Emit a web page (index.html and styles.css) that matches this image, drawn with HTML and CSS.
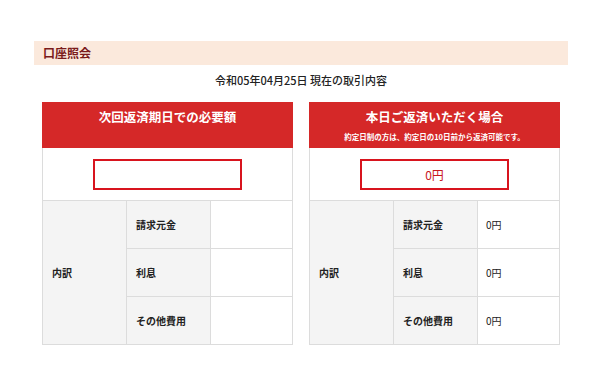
FILE: index.html
```html
<!DOCTYPE html>
<html lang="ja">
<head>
<meta charset="utf-8">
<link rel="stylesheet" href="styles.css">
</head>
<body>
<div class="page">
  <h1 class="page-title">口座照会</h1>
  <p class="date">令和05年04月25日 現在の取引内容</p>
  <div class="panels">
    <section class="panel">
      <div class="panel-head">
        <div class="panel-title">次回返済期日での必要額</div>
      </div>
      <div class="panel-body">
        <div class="amount-row"><div class="amount-box"></div></div>
        <div class="breakdown">
          <div class="cell label-main">内訳</div>
          <div class="cell label">請求元金</div>
          <div class="cell value"></div>
          <div class="cell label">利息</div>
          <div class="cell value"></div>
          <div class="cell label">その他費用</div>
          <div class="cell value"></div>
        </div>
      </div>
    </section>
    <section class="panel">
      <div class="panel-head">
        <div class="panel-title">本日ご返済いただく場合</div>
        <div class="panel-sub">約定日制の方は、約定日の10日前から返済可能です。</div>
      </div>
      <div class="panel-body">
        <div class="amount-row"><div class="amount-box">0円</div></div>
        <div class="breakdown">
          <div class="cell label-main">内訳</div>
          <div class="cell label">請求元金</div>
          <div class="cell value">0円</div>
          <div class="cell label">利息</div>
          <div class="cell value">0円</div>
          <div class="cell label">その他費用</div>
          <div class="cell value">0円</div>
        </div>
      </div>
    </section>
  </div>
</div>
</body>
</html>
```
FILE: styles.css
```css
* { box-sizing: border-box; }
html, body { margin: 0; padding: 0; background: #fff; }
body {
  font-family: "Noto Sans CJK JP", "Noto Sans", sans-serif;
  color: #222;
}
.page {
  width: 534px;
  margin: 41px 0 0 34px;
}
.page-title {
  margin: 0;
  height: 24px;
  line-height: 24px;
  padding-left: 9px;
  background: #fbe9dc;
  color: #7a1b1b;
  font-size: 12px;
  font-weight: bold;
}
.date {
  margin: 7px 0 0;
  text-align: center;
  font-size: 11px;
  line-height: 16px;
  font-weight: 500;
  color: #222;
}
.panels {
  display: flex;
  gap: 16px;
  padding: 0 8px;
  margin-top: 14px;
}
.panel {
  width: 251px;
}
.panel-head {
  height: 46px;
  background: #d52828;
  color: #fff;
  text-align: center;
  padding-top: 6px;
}
.panel-title {
  font-size: 12.5px;
  font-weight: bold;
  line-height: 18px;
}
.panel-sub {
  margin-top: 5px;
  font-size: 7.5px;
  line-height: 12px;
  font-weight: bold;
}
.panel-body {
  border: 1px solid #dcdcdc;
  border-top: none;
}
.amount-row {
  height: 53px;
  border-bottom: 1px solid #dcdcdc;
  display: flex;
  align-items: center;
  justify-content: center;
}
.amount-box {
  width: 149px;
  height: 31px;
  border: 2px solid #d8141e;
  color: #c8161d;
  font-size: 12px;
  display: flex;
  align-items: center;
  justify-content: center;
}
.breakdown {
  display: grid;
  grid-template-columns: 83px 83px 1fr;
  grid-template-rows: 47px 47px 47px;
  gap: 1px;
  background: #dcdcdc;
}
.cell {
  display: flex;
  align-items: center;
  padding-left: 9px;
  font-size: 10px;
  background: #fff;
}
.label-main {
  grid-row: 1 / 4;
  background: #f4f4f4;
  font-weight: bold;
}
.label {
  background: #f4f4f4;
  font-weight: bold;
}
.value {
  padding-left: 8px;
}
```
